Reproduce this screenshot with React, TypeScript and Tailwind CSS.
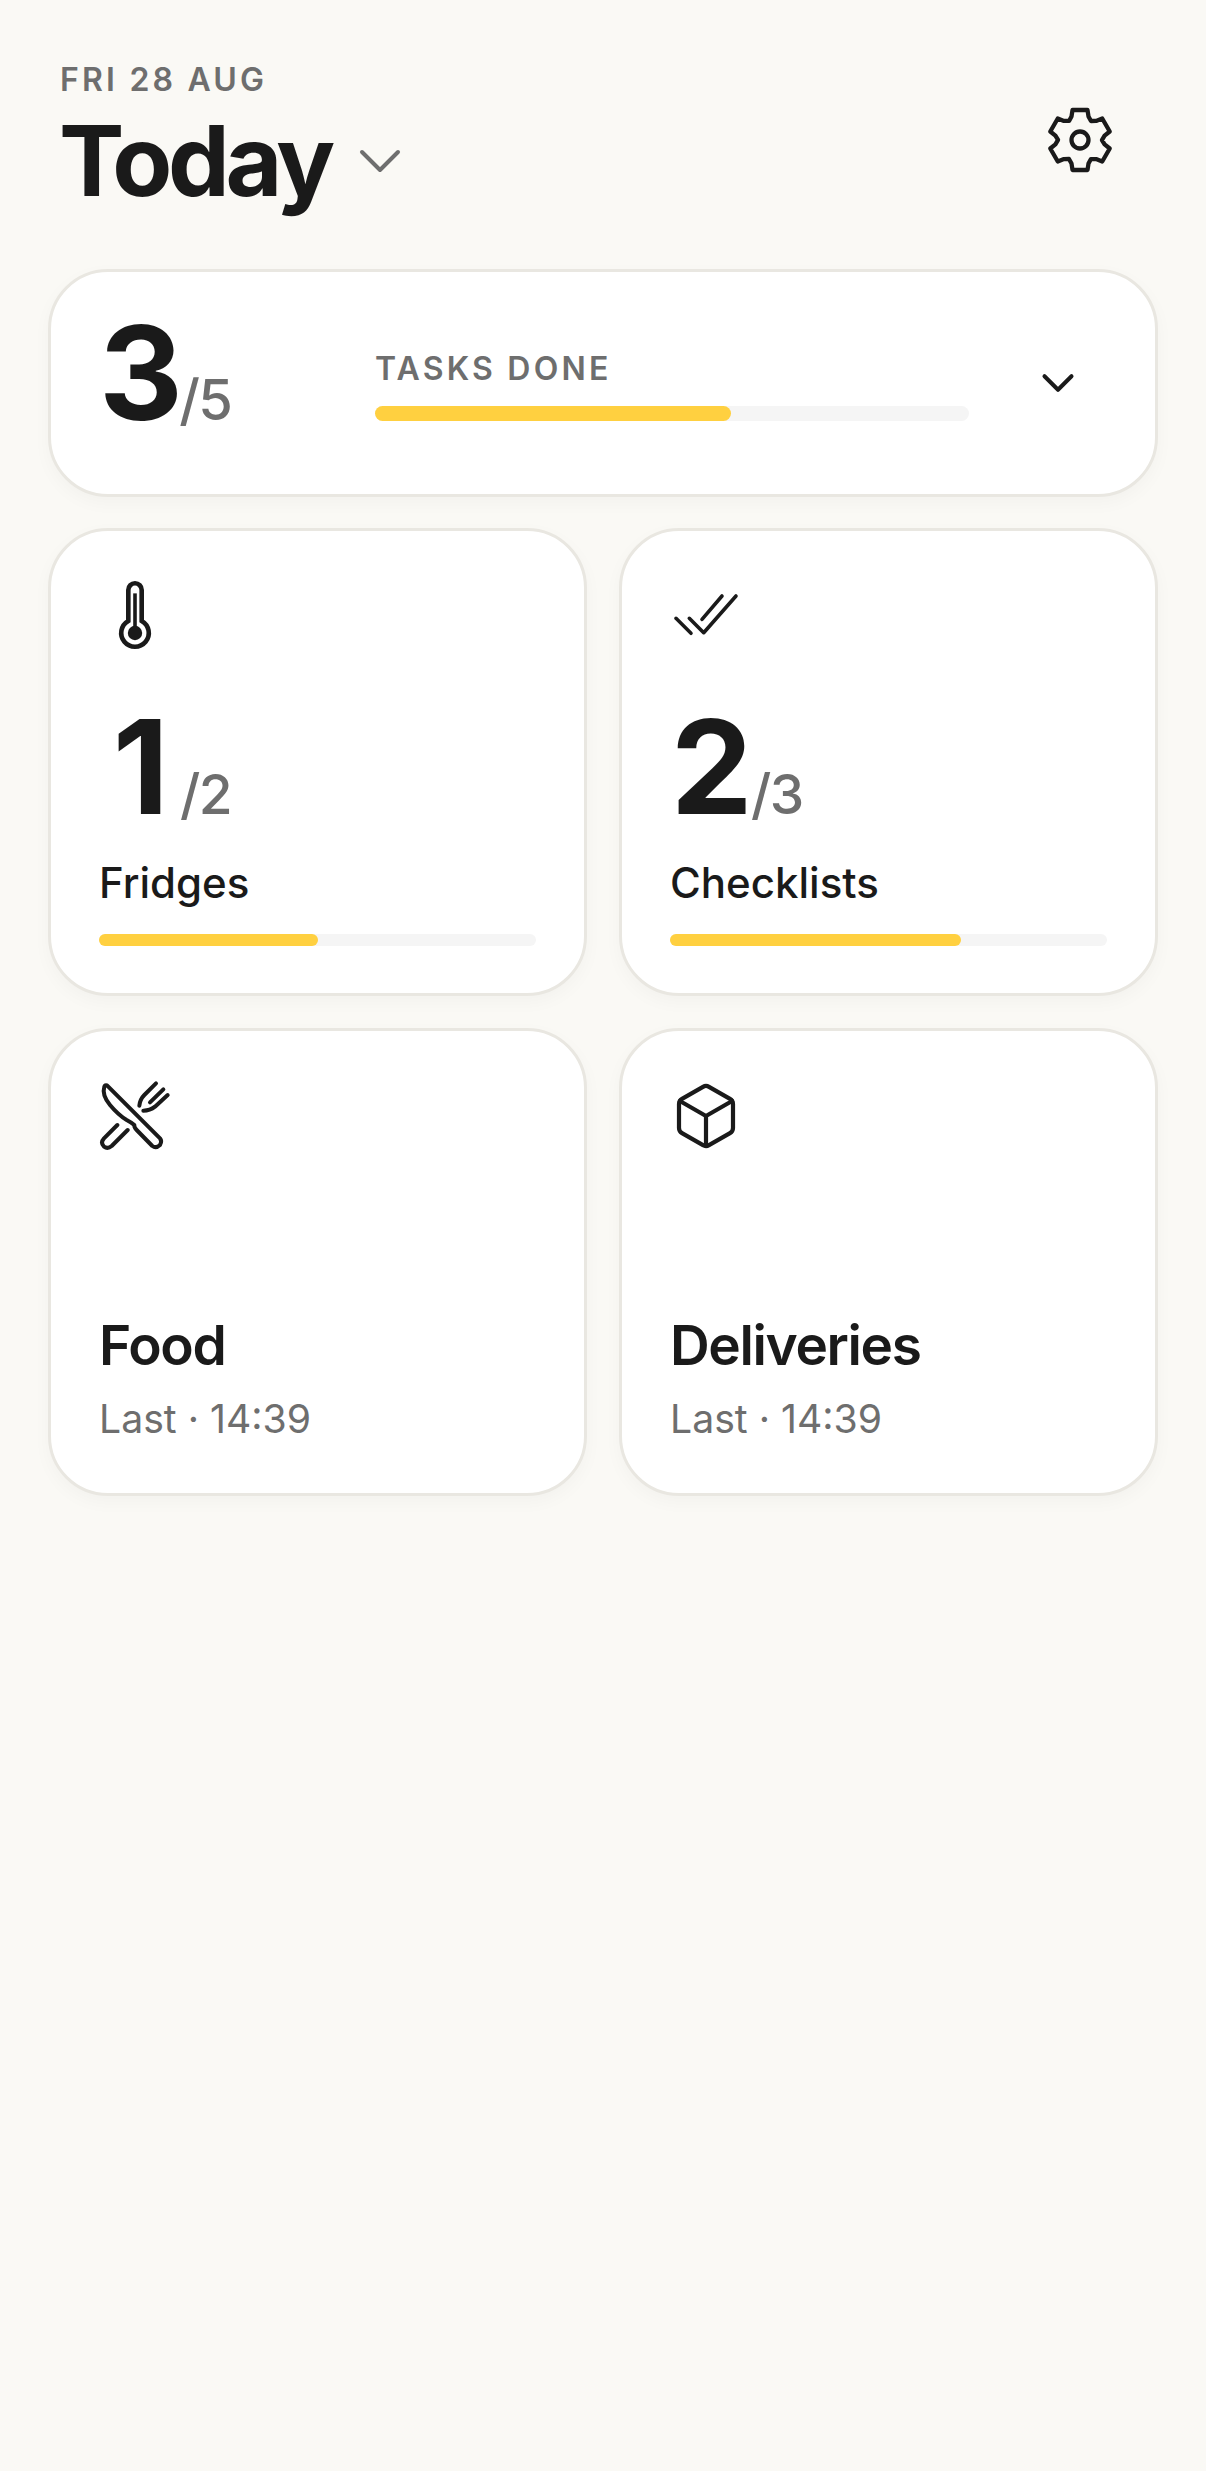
import React from 'react';
import { Box, ChevronDown } from 'lucide-react';

// six teeth, points taken round the centre of a 100 box
const gearPoints = [0, 60, 120, 180, 240, 300]
  .flatMap((deg) => {
    const a = (deg * Math.PI) / 180;
    const tooth = [[-8.5, 23.5], [-7.5, 30], [7.5, 30], [8.5, 23.5], [11, 19]];
    return tooth.map(([v, u]) => `${(50 + v * Math.cos(a) + u * Math.sin(a)).toFixed(2)},${(50 + v * Math.sin(a) - u * Math.cos(a)).toFixed(2)}`);
  })
  .join(' ');

const GearIcon = () => (
  <svg className="w-[100px] h-[100px] text-[#1a1a1a]" viewBox="0 0 100 100" fill="none" stroke="currentColor" strokeWidth={4.3} strokeLinejoin="round">
    <polygon points={gearPoints} />
    <circle cx="50" cy="50" r="8.5" />
  </svg>
);

const ThermometerIcon = () => (
  <svg className="w-[72px] h-[72px] text-[#1a1a1a]" viewBox="-19 -1 70 70" fill="none" stroke="currentColor">
    <path strokeWidth={4.5} d="M9.5 8.7a6.5 6.5 0 0 1 13 0v30.1a13.4 13.4 0 1 1-13 0z" />
    <path strokeWidth={3.5} d="M16 12v38" />
    <circle cx="16" cy="50.5" r="7" fill="currentColor" stroke="none" />
  </svg>
);

const ChecksIcon = () => (
  <svg className="w-[72px] h-[72px] text-[#1a1a1a]" viewBox="-4 -14 72 72" fill="none" stroke="currentColor" strokeWidth={3.6} strokeLinecap="round" strokeLinejoin="round">
    <path d="M2 24.3l15 15" />
    <path d="M15.3 24.3l14.4 14.4L62 2" />
    <path d="M28 25.3L48 2" />
  </svg>
);

const UtensilsIcon = () => (
  <svg className="w-[72px] h-[72px] text-[#1a1a1a]" viewBox="42 30 216 216" fill="none" stroke="currentColor" strokeWidth={12} strokeLinecap="round" strokeLinejoin="round">
    <path d="M66 46L225 205Q232 213 225 225Q213 236 202 228L155 180Q147 172 148 165Q140 158 125 150Q100 135 75 105Q50 75 58 50Q60 44 66 46Z" />
    <path d="M97 165L57 205Q45 218 57 230Q68 238 80 228L128 180" />
    <path d="M213 40L178 75Q165 88 163 107" />
    <path d="M235 58L195 97" />
    <path d="M248 75L210 110Q195 122 175 122" />
  </svg>
);

const ProgressBar: React.FC<{ percent: number; className: string }> = ({ percent, className }) => (
  <div className={`rounded-full bg-[#f5f5f5] ${className}`}>
    <div className="h-full rounded-full bg-[#ffd040]" style={{ width: `${percent}%` }}></div>
  </div>
);

const Card: React.FC<{ children: React.ReactNode }> = ({ children }) => (
  <div className="h-[468px] rounded-[60px] border-[3px] border-[#e9e7e1] bg-white px-[48px] pt-[49px] shadow-[0_6px_18px_rgba(0,0,0,0.03)]">
    {children}
  </div>
);

const CountCard: React.FC<{ icon: React.ReactNode; done: number; total: number; label: string; percent: number }> = ({ icon, done, total, label, percent }) => (
  <Card>
    {icon}
    <div className="mt-[51px] flex items-baseline">
      <span className="w-[81px] text-center text-[130px] leading-[128px] font-bold tracking-[-0.02em] text-[#1a1a1a]">{done}</span>
      <span className="text-[55px] font-medium tracking-[-0.03em] text-[#6e6e6e]">/{total}</span>
    </div>
    <p className="mt-[21px] text-[42px] leading-[52px] font-medium text-[#1a1a1a]">{label}</p>
    <ProgressBar percent={percent} className="mt-[25px] h-[12px]" />
  </Card>
);

const LogCard: React.FC<{ icon: React.ReactNode; label: string }> = ({ icon, label }) => (
  <Card>
    {icon}
    <p className="mt-[161px] text-[55px] leading-[64px] font-semibold tracking-[-0.025em] text-[#1a1a1a]">{label}</p>
    <p className="mt-[18px] text-[39.2px] leading-[48px] font-normal text-[#6e6e6e]">Last · 14:39</p>
  </Card>
);

const App: React.FC = () => {
  return (
    <div className="min-h-screen bg-[#faf9f5] px-[48px] pt-[60px] font-['Inter',sans-serif]">
      <header className="mb-[58px] flex items-start justify-between pl-[11px]">
        <div>
          <p className="pl-[1px] text-[32px] leading-[40px] font-semibold tracking-[0.1em] text-[#6e6e6e]">FRI 28 AUG</p>
          <div className="mt-[11px] flex items-center gap-[13px]">
            <h1 className="text-[98px] leading-[100px] font-bold tracking-[-0.045em] text-[#1a1a1a]">Today</h1>
            <ChevronDown size={72} strokeWidth={1.33} className="text-[#6e6e6e]" />
          </div>
        </div>
        <div className="mr-[28px] mt-[30px]">
          <GearIcon />
        </div>
      </header>

      <section className="flex h-[228px] items-center rounded-[60px] border-[3px] border-[#e9e7e1] bg-white pl-[48px] pr-[70px] shadow-[0_6px_18px_rgba(0,0,0,0.03)]">
        <div className="mb-[16px] flex w-[276px] items-baseline">
          <span className="text-[130px] leading-[130px] font-bold tracking-[-0.02em] text-[#1a1a1a]">3</span>
          <span className="-ml-[1px] text-[56px] font-medium tracking-[-0.03em] text-[#6e6e6e]">/5</span>
        </div>
        <div className="mt-[3px] w-[594px]">
          <p className="text-[32px] leading-[40px] font-semibold tracking-[0.1em] text-[#6e6e6e]">TASKS DONE</p>
          <ProgressBar percent={60} className="mt-[17px] h-[15px]" />
        </div>
        <ChevronDown size={54} strokeWidth={1.8} className="ml-auto text-[#1a1a1a]" />
      </section>

      <div className="mt-[31px] grid grid-cols-2 gap-[32px]">
        <CountCard icon={<ThermometerIcon />} done={1} total={2} label="Fridges" percent={50} />
        <CountCard icon={<ChecksIcon />} done={2} total={3} label="Checklists" percent={66.7} />
        <LogCard icon={<UtensilsIcon />} label="Food" />
        <LogCard icon={<Box size={72} strokeWidth={1.4} className="text-[#1a1a1a]" />} label="Deliveries" />
      </div>
    </div>
  );
};

export default App;
